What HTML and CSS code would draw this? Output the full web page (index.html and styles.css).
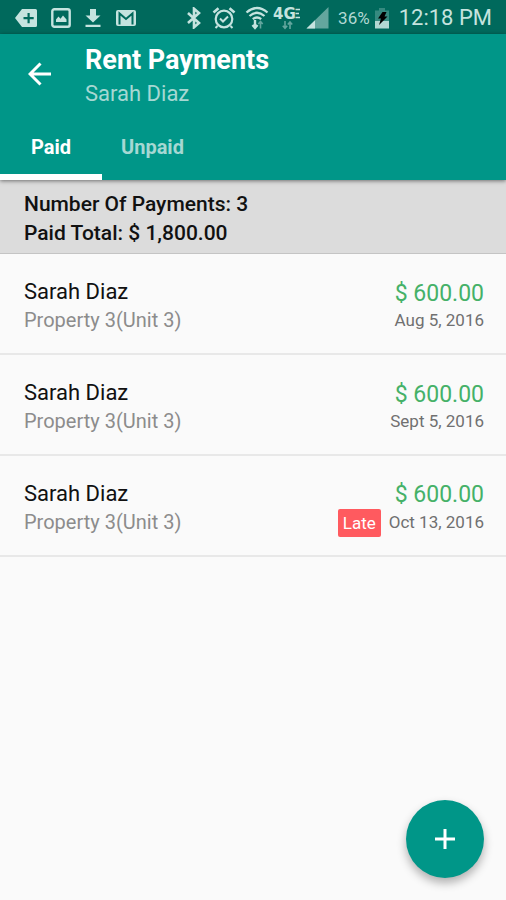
FILE: index.html
```html
<!DOCTYPE html>
<html lang="en">
<head>
<meta charset="UTF-8">
<meta name="viewport" content="width=device-width, initial-scale=1">
<title>Rent Payments</title>
<link rel="stylesheet" href="styles.css">
</head>
<body>
  <div class="status-bar">
    <div class="status-left">
      <svg width="22" height="20" viewBox="0 0 22 20"><path fill="currentColor" fill-rule="evenodd" d="M7 1h13.500q1.500 0 1.500 1.500v15q0 1.500-1.500 1.500H7L0 10zM12.500 5v4H8.500v2.200h4v4h2.200v-4h4V9h-4V5z"/></svg>
      <svg width="20" height="20" viewBox="0 0 20 20"><rect x="1.300" y="1.300" width="17.400" height="17.400" rx="2" fill="none" stroke="currentColor" stroke-width="2.400"/><path fill="currentColor" d="M5 14V11.500l2.500-3 2 2.300L12 7.500l3.500 4V14z"/></svg>
      <svg width="16" height="20" viewBox="0 0 16 20"><path fill="currentColor" d="M5 1h6v6.500h4.500L8 14.500.5 7.500H5zM.5 16.800h15V19H.5z"/></svg>
      <svg width="22" height="20" viewBox="0 0 22 20"><rect x="1" y="2" width="20" height="16" rx="2" fill="currentColor"/><path fill="none" stroke="#00695c" stroke-width="2" d="M4.500 16.500V5.500L11 11l6.500-5.500v11"/></svg>
    </div>
    <div class="status-right">
      <svg width="18" height="22" viewBox="0 0 18 22"><path fill="none" stroke="currentColor" stroke-width="2.600" d="M3 6l11 10-5 4.300V1.700L14 6 3 16"/></svg>
      <svg width="24" height="24" viewBox="0 0 24 24" fill="none" stroke="currentColor"><circle cx="12" cy="13" r="8.300" stroke-width="2.200"/><path stroke-width="2.600" d="M1.500 6.500l5-4.300M22.500 6.500l-5-4.300"/><path stroke-width="2" d="M8 12.500l3 3 5-5M5.500 20l-2 2M18.500 20l2 2"/></svg>
      <div class="signals">
        <svg width="24" height="24" viewBox="0 0 24 24" fill="none" stroke="currentColor" stroke-width="2.300"><path d="M1.500 6.500q10.500-9 21 0M4.500 10q7.500-6.400 15 0M7.800 13.200q4.200-3.500 8.400 0"/><path stroke-width="2.400" d="M10 14v7M7.500 19l2.500 3 2.500-3"/><path stroke-width="1.600" opacity=".5" d="M15.500 22.500v-7M13.300 18l2.200-2.500 2.200 2.500"/></svg>
        <svg width="28" height="24" viewBox="0 0 28 24" fill="none" stroke="currentColor"><text class="network" x="0" y="13">4G</text><path stroke-width="1.400" d="M22.500 3.500H27M22.500 7.500h3.500M22.500 11.500H27"/><path stroke-width="1.600" opacity=".5" d="M12 15v7M9.800 19.800l2.200 2.500 2.200-2.500M17 23v-7M14.800 18.500L17 16l2.200 2.500"/></svg>
        <svg width="24" height="24" viewBox="0 0 24 24"><path fill="currentColor" opacity=".5" d="M23.500 1v21.500H1.500z"/><path fill="currentColor" d="M10 14.200v8.300H1.500z"/></svg>
      </div>
      <div class="battery">
        <span>36%</span>
        <svg width="16" height="22" viewBox="0 0 16 22"><path fill="currentColor" opacity=".3" d="M5 1h6v2.500h4V14H1V3.500h4z"/><path fill="currentColor" d="M1 14h14v7.500H1z"/><path d="M8.500 5h4L10.500 9.500h3L5 18l2-6.500H4z"/></svg>
      </div>
      <time class="clock">12:18 PM</time>
    </div>
  </div>

  <header class="app-bar">
    <div class="toolbar">
      <button class="back" aria-label="Back">
        <svg width="24" height="24" viewBox="0 0 24 24" fill="none" stroke="currentColor" stroke-width="3"><path d="M23 12H2.500M12.500 1.500L2 12l10.500 10.500"/></svg>
      </button>
      <div>
        <h1 class="title">Rent Payments</h1>
        <div class="subtitle">Sarah Diaz</div>
      </div>
    </div>
    <nav class="tabs">
      <button class="tab active">Paid</button>
      <button class="tab">Unpaid</button>
    </nav>
  </header>

  <main>
    <section class="summary">
      <div>Number Of Payments: 3</div>
      <div>Paid Total: $ 1,800.00</div>
    </section>
    <ul class="payments">
      <li class="payment">
        <div>
          <div class="name">Sarah Diaz</div>
          <div class="property">Property 3(Unit 3)</div>
        </div>
        <div class="details">
          <div class="amount">$ 600.00</div>
          <div class="date">Aug 5, 2016</div>
        </div>
      </li>
      <li class="payment">
        <div>
          <div class="name">Sarah Diaz</div>
          <div class="property">Property 3(Unit 3)</div>
        </div>
        <div class="details">
          <div class="amount">$ 600.00</div>
          <div class="date">Sept 5, 2016</div>
        </div>
      </li>
      <li class="payment">
        <div>
          <div class="name">Sarah Diaz</div>
          <div class="property">Property 3(Unit 3)</div>
        </div>
        <div class="details">
          <div class="amount">$ 600.00</div>
          <div class="date"><span class="late">Late</span>Oct 13, 2016</div>
        </div>
      </li>
    </ul>
  </main>

  <button class="fab" aria-label="Add payment">
    <svg width="22" height="22" viewBox="0 0 22 22" fill="none" stroke="currentColor" stroke-width="3"><path d="M11 1v20M1 11h20"/></svg>
  </button>
</body>
</html>
```

FILE: styles.css
```css
* {
  box-sizing: border-box;
}

body {
  margin: 0;
  background: #fafafa;
  font-family: Roboto, sans-serif;
  color: #111;
}

svg {
  display: block;
  flex: none;
}

button {
  border: none;
  padding: 0;
  background: none;
  font-family: inherit;
  cursor: pointer;
}

.status-bar {
  display: flex;
  justify-content: space-between;
  align-items: center;
  height: 34px;
  padding: 2px 14px 0 15px;
  background: #00695c;
  color: #c5e3df;
}

.status-left {
  display: flex;
  align-items: center;
  gap: 14px;
}

.status-right {
  display: flex;
  align-items: center;
  gap: 9px;
}

.signals,
.battery {
  display: flex;
  align-items: center;
  gap: 4px;
}

.network {
  font: bold 15px "DejaVu Sans", sans-serif;
  fill: currentColor;
  stroke: none;
}

.battery {
  font-size: 17px;
  color: #b2d8d3;
}

.clock {
  font-size: 22px;
  line-height: 32px;
}

.app-bar {
  position: relative;
  background: #009688;
  color: #fff;
  box-shadow: 0 1px 4px rgba(0, 0, 0, 0.5);
}

.toolbar {
  display: flex;
  align-items: flex-start;
  gap: 33px;
  padding: 10px 28px 4px;
}

.back {
  padding: 18px 0;
  color: #fff;
}

.title {
  margin: 0;
  font-size: 27px;
  font-weight: 700;
  line-height: 33px;
}

.subtitle {
  font-size: 22px;
  line-height: 33px;
  color: #a6d8d3;
}

.tabs {
  display: flex;
}

.tab {
  height: 66px;
  padding: 6px 19px 0;
  border-bottom: 6px solid transparent;
  font-size: 20px;
  font-weight: 700;
  color: #a6d8d3;
}

.tab.active {
  min-width: 102px;
  border-color: #fff;
  color: #fff;
}

.summary {
  padding: 10px 24px 5px;
  border-bottom: 1px solid #c4c4c4;
  background: #dcdcdc;
  font-size: 21px;
  font-weight: 500;
  line-height: 29px;
}

.payments {
  margin: 0;
  padding: 0;
  list-style: none;
}

.payment {
  display: flex;
  justify-content: space-between;
  align-items: center;
  min-height: 101px;
  padding: 6px 22px 0 24px;
  border-bottom: 2px solid #e8e8e8;
}

.name {
  font-size: 22px;
  line-height: 28px;
}

.property {
  font-size: 20px;
  line-height: 29px;
  color: #8c8c8c;
}

.details {
  text-align: right;
}

.amount {
  font-size: 23px;
  line-height: 28px;
  color: #45b168;
}

.date {
  display: flex;
  justify-content: flex-end;
  align-items: center;
  gap: 8px;
  font-size: 17px;
  line-height: 25px;
  color: #707070;
}

.late {
  padding: 0 5px;
  border-radius: 2px;
  background: #ff5a5f;
  line-height: 28px;
  color: #fff;
}

.fab {
  position: fixed;
  right: 22px;
  bottom: 22px;
  display: flex;
  justify-content: center;
  align-items: center;
  width: 78px;
  height: 78px;
  border-radius: 50%;
  background: #009688;
  color: #fff;
  box-shadow: 0 5px 10px rgba(0, 0, 0, 0.3);
}
```
